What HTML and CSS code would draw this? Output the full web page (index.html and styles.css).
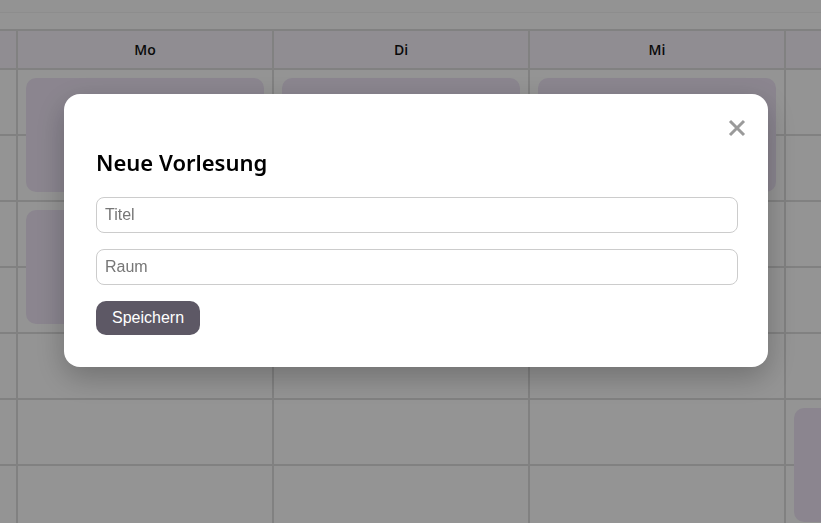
FILE: index.html
```html
<!DOCTYPE html>
<html lang="de">
<head>
<meta charset="utf-8">
<title>Stundenplan</title>
<link rel="stylesheet" href="styles.css">
</head>
<body>
<div class="topbar"></div>
<div class="calendar">
  <div class="grid">
    <div class="cell head" style="grid-column:1;grid-row:1"></div>
    <div class="cell head" style="grid-column:2;grid-row:1">Mo</div>
    <div class="cell head" style="grid-column:3;grid-row:1">Di</div>
    <div class="cell head" style="grid-column:4;grid-row:1">Mi</div>
    <div class="cell head" style="grid-column:5;grid-row:1"></div>

    <div class="cell" style="grid-column:1;grid-row:2"></div><div class="cell" style="grid-column:2;grid-row:2"></div><div class="cell" style="grid-column:3;grid-row:2"></div><div class="cell" style="grid-column:4;grid-row:2"></div><div class="cell" style="grid-column:5;grid-row:2"></div>
    <div class="cell" style="grid-column:1;grid-row:3"></div><div class="cell" style="grid-column:2;grid-row:3"></div><div class="cell" style="grid-column:3;grid-row:3"></div><div class="cell" style="grid-column:4;grid-row:3"></div><div class="cell" style="grid-column:5;grid-row:3"></div>
    <div class="cell" style="grid-column:1;grid-row:4"></div><div class="cell" style="grid-column:2;grid-row:4"></div><div class="cell" style="grid-column:3;grid-row:4"></div><div class="cell" style="grid-column:4;grid-row:4"></div><div class="cell" style="grid-column:5;grid-row:4"></div>
    <div class="cell" style="grid-column:1;grid-row:5"></div><div class="cell" style="grid-column:2;grid-row:5"></div><div class="cell" style="grid-column:3;grid-row:5"></div><div class="cell" style="grid-column:4;grid-row:5"></div><div class="cell" style="grid-column:5;grid-row:5"></div>
    <div class="cell" style="grid-column:1;grid-row:6"></div><div class="cell" style="grid-column:2;grid-row:6"></div><div class="cell" style="grid-column:3;grid-row:6"></div><div class="cell" style="grid-column:4;grid-row:6"></div><div class="cell" style="grid-column:5;grid-row:6"></div>
    <div class="cell" style="grid-column:1;grid-row:7"></div><div class="cell" style="grid-column:2;grid-row:7"></div><div class="cell" style="grid-column:3;grid-row:7"></div><div class="cell" style="grid-column:4;grid-row:7"></div><div class="cell" style="grid-column:5;grid-row:7"></div>
    <div class="cell" style="grid-column:1;grid-row:8"></div><div class="cell" style="grid-column:2;grid-row:8"></div><div class="cell" style="grid-column:3;grid-row:8"></div><div class="cell" style="grid-column:4;grid-row:8"></div><div class="cell" style="grid-column:5;grid-row:8"></div>

    <div class="event" style="grid-column:2;grid-row:2 / 4"></div>
    <div class="event" style="grid-column:2;grid-row:4 / 6"></div>
    <div class="event" style="grid-column:3;grid-row:2 / 4"></div>
    <div class="event" style="grid-column:4;grid-row:2 / 4"></div>
    <div class="event" style="grid-column:5;grid-row:7 / 9"></div>
  </div>
</div>

<div class="overlay">
  <div class="modal">
    <button class="close" aria-label="Schließen">
      <svg width="18" height="18" viewBox="0 0 18 18"><path d="M2 2 L16 16 M16 2 L2 16" stroke="#9a9a9a" stroke-width="3" stroke-linecap="butt" fill="none"/></svg>
    </button>
    <h2 class="title">Neue Vorlesung</h2>
    <input class="field" type="text" placeholder="Titel">
    <input class="field" type="text" placeholder="Raum">
    <button class="save">Speichern</button>
  </div>
</div>
</body>
</html>
```

FILE: styles.css
```css
html, body {
  margin: 0;
  padding: 0;
  background: #ffffff;
  overflow: hidden;
  height: 100%;
}

body {
  font-family: "Open Sans", "Noto Sans", sans-serif;
}

.topbar {
  height: 12px;
  background: #fdfdfd;
  border-bottom: 1px solid #f3f3f3;
}

.calendar {
  margin-top: 16px;
  overflow: hidden;
}

.grid {
  display: grid;
  grid-template-columns: 16px repeat(4, 254px);
  grid-template-rows: 37px repeat(7, 64px);
  gap: 2px;
  padding-top: 2px;
  background: #dedede;
  width: max-content;
}

.cell {
  background: #ffffff;
}

.cell.head {
  background: #f8f3fb;
  display: flex;
  align-items: center;
  justify-content: center;
  font-size: 14px;
  font-weight: 600;
  color: #111;
}

.event {
  margin: 8px;
  background: #efe6f7;
  border-radius: 10px;
  z-index: 1;
}

.overlay {
  position: fixed;
  inset: 0;
  background: rgba(0, 0, 0, 0.42);
  display: flex;
  align-items: flex-start;
  justify-content: flex-start;
  padding: 94px 0 0 64px;
  z-index: 10;
}

.modal {
  position: relative;
  width: 640px;
  padding: 32px;
  background: #ffffff;
  border-radius: 16px;
  box-shadow: 0 10px 30px rgba(0, 0, 0, 0.25);
  display: flex;
  flex-direction: column;
  align-items: flex-start;
}

.close {
  position: absolute;
  top: 25px;
  right: 22px;
  width: 18px;
  height: 18px;
  padding: 0;
  border: none;
  background: none;
  display: flex;
}

.title {
  margin: 20px 0 19px;
  font-family: "Noto Sans", "Open Sans", sans-serif;
  font-size: 22px;
  font-weight: 600;
  line-height: 32px;
  color: #000;
}

.field {
  box-sizing: border-box;
  width: 642px;
  height: 36px;
  margin: 0 0 16px;
  padding: 0 8px;
  border: 1px solid #cccccc;
  border-radius: 8px;
  font-family: "Liberation Sans", Arial, sans-serif;
  font-size: 16px;
  color: #222;
  background: #fff;
}

.field::placeholder {
  color: #767676;
}

.save {
  height: 34px;
  padding: 0 16px;
  border: none;
  border-radius: 10px;
  background: #5d5865;
  color: #ffffff;
  font-family: "Liberation Sans", Arial, sans-serif;
  font-size: 16px;
}
```
